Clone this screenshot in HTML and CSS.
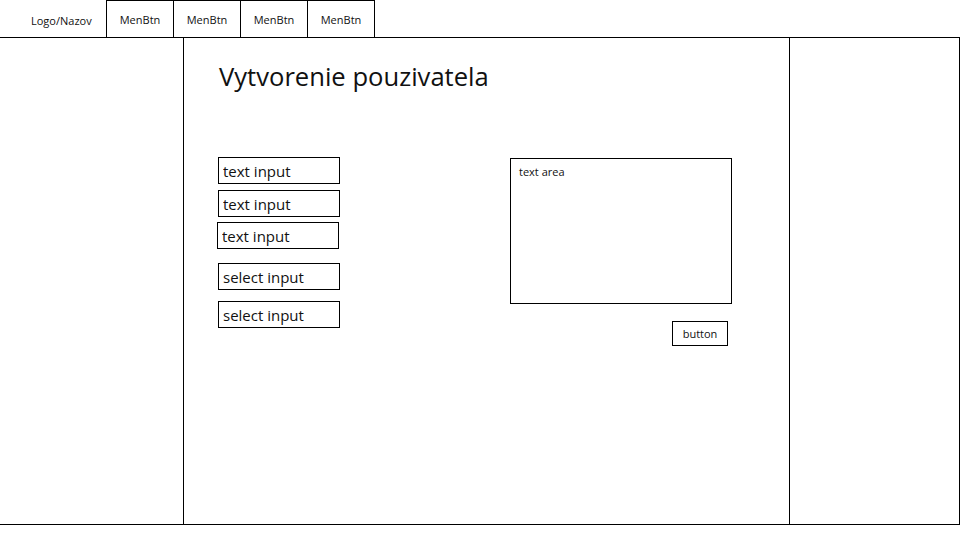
FILE: index.html
```html
<!DOCTYPE html>
<html lang="sk">
<head>
    <meta charset="UTF-8">
    <meta name="viewport" content="width=device-width, initial-scale=1.0">
    <title>Vytvorenie pouzivatela</title>
    <link rel="stylesheet" href="styles.css">
</head>
<body>
    <header class="topbar">
        <div class="logo">Logo/Nazov</div>
        <nav class="menu">
            <a class="menu-btn" href="#">MenBtn</a>
            <a class="menu-btn" href="#">MenBtn</a>
            <a class="menu-btn" href="#">MenBtn</a>
            <a class="menu-btn" href="#">MenBtn</a>
        </nav>
    </header>

    <main class="layout">
        <aside class="side-left"></aside>

        <section class="content">
            <h1>Vytvorenie pouzivatela</h1>
            <form class="user-form">
                <div class="fields">
                    <input type="text" class="field" value="text input">
                    <input type="text" class="field field-2" value="text input">
                    <input type="text" class="field field-3" value="text input">
                    <select class="field field-4">
                        <option>select input</option>
                    </select>
                    <select class="field field-5">
                        <option>select input</option>
                    </select>
                </div>
                <div class="note">
                    <textarea>text area</textarea>
                    <button type="submit">button</button>
                </div>
            </form>
        </section>

        <aside class="side-right"></aside>
    </main>
</body>
</html>
```

FILE: styles.css
```css
* {
    box-sizing: border-box;
    margin: 0;
    padding: 0;
}

body {
    font-family: "Open Sans", sans-serif;
    color: #111;
    background-color: white;
    width: 960px;
}

.topbar {
    display: flex;
    height: 37px;
}

.logo {
    width: 106px;
    padding-left: 31px;
    font-size: 11px;
    line-height: 42px;
}

.menu {
    display: flex;
}

.menu-btn {
    width: 67px;
    border-top: 1px solid #000;
    border-left: 1px solid #000;
    text-align: center;
    font-size: 11px;
    line-height: 37px;
    color: #111;
    text-decoration: none;
}

.menu-btn:last-child {
    width: 68px;
    border-right: 1px solid #000;
}

.layout {
    display: flex;
    height: 488px;
    border-top: 1px solid #000;
    border-bottom: 1px solid #000;
}

.side-left {
    width: 183px;
}

.content {
    width: 607px;
    border-left: 1px solid #000;
    border-right: 1px solid #000;
    padding-left: 34px;
}

.side-right {
    width: 170px;
    border-right: 1px solid #000;
}

h1 {
    font-weight: normal;
    font-size: 25.6px;
    line-height: 32px;
    margin-top: 23px;
    margin-left: 1px;
}

.user-form {
    display: flex;
    margin-top: 64px;
}

.fields {
    display: flex;
    flex-direction: column;
    width: 122px;
}

.field {
    width: 122px;
    height: 27px;
    border: 1px solid #000;
    border-radius: 0;
    background: white;
    font-family: "Open Sans", sans-serif;
    font-size: 15px;
    color: #111;
    padding: 0 4px;
    appearance: none;
    outline: none;
}

.field-2 {
    margin-top: 6px;
}

.field-3 {
    margin-top: 5px;
    margin-left: -1px;
}

.field-4 {
    margin-top: 14px;
}

.field-5 {
    margin-top: 11px;
}

.note {
    display: flex;
    flex-direction: column;
    align-items: flex-end;
    margin-left: 170px;
}

textarea {
    width: 222px;
    height: 146px;
    margin-top: 1px;
    border: 1px solid #000;
    padding: 5px 8px;
    font-family: "Open Sans", sans-serif;
    font-size: 11px;
    color: #111;
    resize: none;
    outline: none;
}

button {
    width: 56px;
    height: 25px;
    margin-top: 17px;
    margin-right: 4px;
    border: 1px solid #000;
    background: white;
    font-family: "Open Sans", sans-serif;
    font-size: 11px;
    color: #111;
}
```
